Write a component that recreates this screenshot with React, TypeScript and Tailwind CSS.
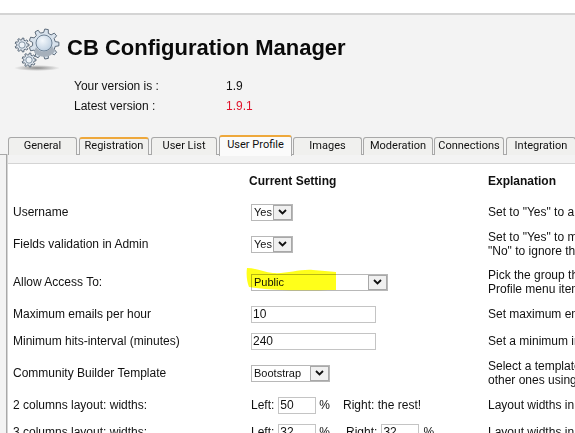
import type { ReactNode } from "react";

const arial = "font-['Liberation_Sans',Arial,sans-serif]";

const tabs = [
  { label: "General", width: "w-[69px]" },
  { label: "Registration", width: "w-[70px] ml-px", orange: true },
  { label: "User List", width: "w-[66px] ml-px" },
  { label: "User Profile", width: "w-[73px] ml-px", active: true },
  { label: "Images", width: "w-[69px]" },
  { label: "Moderation", width: "w-[70px]" },
  { label: "Connections", width: "w-[70px]" },
  { label: "Integration", width: "w-[70px] ml-px" },
];

// Builds the outline of a cog wheel
const gearPath = (cx: number, cy: number, outer: number, inner: number, teeth: number) => {
  const points: string[] = [];
  const step = (Math.PI * 2) / teeth;
  for (let i = 0; i < teeth; i++) {
    const a = i * step;
    const pts: [number, number][] = [
      [inner, a - step * 0.3],
      [outer, a - step * 0.17],
      [outer, a + step * 0.17],
      [inner, a + step * 0.3],
    ];
    pts.forEach(([r, t]) => {
      points.push(`${(cx + r * Math.cos(t)).toFixed(1)} ${(cy + r * Math.sin(t)).toFixed(1)}`);
    });
  }
  return `M${points.join("L")}Z`;
};

const GearsLogo = () => (
  <svg width="48" height="46" viewBox="0 0 48 46" className="shrink-0">
    <defs>
      <radialGradient id="face" cx="0.4" cy="0.35" r="0.8">
        <stop offset="0" stopColor="#f4f8fc" />
        <stop offset="1" stopColor="#b4c8dc" />
      </radialGradient>
      <radialGradient id="shadow">
        <stop offset="0" stopColor="#8a8a8a" />
        <stop offset="1" stopColor="#f3f3f3" />
      </radialGradient>
    </defs>
    <ellipse cx="23" cy="41" rx="23" ry="3" fill="url(#shadow)" />
    <path d={gearPath(30, 17, 15, 11.5, 9)} fill="#d8e2ec" stroke="#4e5d6e" strokeWidth="0.9" />
    <path d="M20 25 A13 13 0 0 0 41 24 L38 19 A9 9 0 0 1 22 20Z" fill="#a6b0bb" />
    <circle cx="30" cy="16" r="8" fill="url(#face)" stroke="#64788c" strokeWidth="0.9" />
    <path d={gearPath(8, 18, 7, 5.2, 9)} fill="#dfe6ee" stroke="#4e5d6e" strokeWidth="0.9" />
    <circle cx="8" cy="18" r="3.2" fill="#eef3f8" stroke="#64788c" strokeWidth="0.8" />
    <path d={gearPath(15, 33, 7, 5.2, 9)} fill="#dfe6ee" stroke="#4e5d6e" strokeWidth="0.9" />
    <circle cx="15" cy="33" r="3.2" fill="#eef3f8" stroke="#64788c" strokeWidth="0.8" />
  </svg>
);

const Chevron = () => (
  <svg width="9" height="6" viewBox="0 0 9 6">
    <path d="M1 1 L4.5 4.5 L8 1" fill="none" stroke="#111" strokeWidth="1.8" />
  </svg>
);

const FakeSelect = ({ value, width }: { value: string; width: string }) => (
  <div className={`flex h-[17px] items-center justify-between border border-[#b8b8b8] bg-transparent pl-[2px] ${width}`}>
    <span className="text-[11px] leading-none text-[#111]">{value}</span>
    <span className="flex h-[15px] w-[19px] items-center justify-center border border-[#a8a8a8] bg-[#f0f0f0]">
      <Chevron />
    </span>
  </div>
);

const TextBox = ({ value, width }: { value: string; width: string }) => (
  <div className={`flex h-[17px] items-center border border-[#c4c4c4] bg-white pl-[1px] text-[12px] leading-none text-[#111] ${width}`}>
    {value}
  </div>
);

type RowProps = {
  height: string;
  label: string;
  lines: string[];
  children: ReactNode;
};

const Row = ({ height, label, lines, children }: RowProps) => (
  <div className={`grid grid-cols-[238px_237px_1fr] items-center ${height}`}>
    <span className="text-[12px] text-[#111]">{label}</span>
    <div className="flex items-center text-[12px] text-[#111]">{children}</div>
    <div className="overflow-hidden whitespace-nowrap text-[12px] leading-[14px] text-[#111]">
      {lines.map((line) => (
        <div key={line}>{line}</div>
      ))}
    </div>
  </div>
);

const Tab = ({ label, width, orange, active }: { label: string; width: string; orange?: boolean; active?: boolean }) => (
  <div
    className={`flex shrink-0 items-center justify-center rounded-t-[3px] border border-b-0 border-[#a8a8a8] font-['Roboto',sans-serif] text-[11px] text-[#111] ${width} ${
      active ? "relative z-10 -mt-[2px] h-[21px] border-t-2 border-t-[#eea83c] bg-[#fbfbfb] pb-[3px]" : "h-[18px] bg-[#f0f0ee]"
    } ${orange ? "border-t-2 border-t-[#eea83c] pb-px" : ""}`}
  >
    {label}
  </div>
);

export default function App() {
  return (
    <div className={`relative h-[433px] w-[575px] overflow-hidden bg-white ${arial}`}>
      <div className="h-[13px]" />
      <div className="h-[124px] border-t-2 border-[#d4d4d4] bg-[#f3f3f3]">
        <div className="flex items-center gap-[5px] pl-[14px] pt-[12px]">
          <GearsLogo />
          <h1 className="-mt-[6px] whitespace-nowrap text-[22px] font-bold text-[#0a0a0a]">CB Configuration Manager</h1>
        </div>
        <div className="mt-[6px] grid grid-cols-[152px_1fr] gap-y-[6px] pl-[74px] text-[12px] leading-[14px] text-[#111]">
          <span>Your version is :</span>
          <span>1.9</span>
          <span>Latest version :</span>
          <span className="text-[#e0142c]">1.9.1</span>
        </div>
      </div>

      <div className="flex h-[17px] items-start gap-px bg-[#f3f3f3] pl-[8px]">
        {tabs.map((tab) => (
          <Tab key={tab.label} {...tab} />
        ))}
      </div>

      <div className="h-[9px] border-t border-[#a8a8a8] bg-[#f3f3f3]" />
      <div className="border-t border-[#d4d4d4] pl-[13px]">
        <div className="grid h-[34px] grid-cols-[236px_239px_1fr] items-center text-[12px] font-bold text-[#111]">
          <span />
          <span>Current Setting</span>
          <span>Explanation</span>
        </div>
        <Row height="h-[28px]" label="Username" lines={['Set to "Yes" to allow users to sign up']}>
          <FakeSelect value="Yes" width="w-[42px]" />
        </Row>
        <Row
          height="h-[36px]"
          label="Fields validation in Admin"
          lines={['Set to "Yes" to make all fields required', '"No" to ignore the field settings']}
        >
          <FakeSelect value="Yes" width="w-[42px]" />
        </Row>
        <Row
          height="h-[40px]"
          label="Allow Access To:"
          lines={["Pick the group that can view profiles", "Profile menu item access applies"]}
        >
          <FakeSelect value="Public" width="w-[137px]" />
        </Row>
        <Row height="h-[24px]" label="Maximum emails per hour" lines={["Set maximum emails per hour allowed"]}>
          <TextBox value="10" width="w-[125px]" />
        </Row>
        <Row height="h-[30px]" label="Minimum hits-interval (minutes)" lines={["Set a minimum interval between hits"]}>
          <TextBox value="240" width="w-[125px]" />
        </Row>
        <Row
          height="h-[34px]"
          label="Community Builder Template"
          lines={["Select a template for the look of CB", "other ones using the plugin manager"]}
        >
          <FakeSelect value="Bootstrap" width="w-[79px]" />
        </Row>
        <Row height="h-[30px]" label="2 columns layout: widths:" lines={["Layout widths in percent"]}>
          <span className="mr-[4px]">Left:</span>
          <TextBox value="50" width="w-[38px]" />
          <span className="ml-[3px]">%</span>
          <span className="ml-[13px]">Right: the rest!</span>
        </Row>
        <Row height="h-[24px]" label="3 columns layout: widths:" lines={["Layout widths in percent"]}>
          <span className="mr-[4px]">Left:</span>
          <TextBox value="32" width="w-[38px]" />
          <span className="ml-[3px]">%</span>
          <span className="ml-[16px] mr-[4px]">Right:</span>
          <TextBox value="32" width="w-[38px]" />
          <span className="ml-[4px]">%</span>
        </Row>
      </div>

      {/* grey strip and border left of the panel */}
      <div className="absolute left-0 top-[155px] h-[278px] w-[6px] bg-[#f3f3f3]" />
      <div className="absolute left-[6px] top-[154px] h-[279px] w-[2px] border-l border-[#a8a8a8] bg-[#d4d4d4]" />

      {/* yellow marker scribble over the Allow Access select */}
      <svg className="absolute left-[245px] top-[266px] mix-blend-multiply" width="94" height="26" viewBox="0 0 94 26">
        <path
          d="M2 2 C10 2 18 6 28 7 C42 8 54 3 68 4 C76 5 84 5 91 6 L91 24 C70 24 40 25 20 23 L4 21 C2 16 1 9 2 2Z"
          fill="#ffff1a"
        />
      </svg>
    </div>
  );
}
